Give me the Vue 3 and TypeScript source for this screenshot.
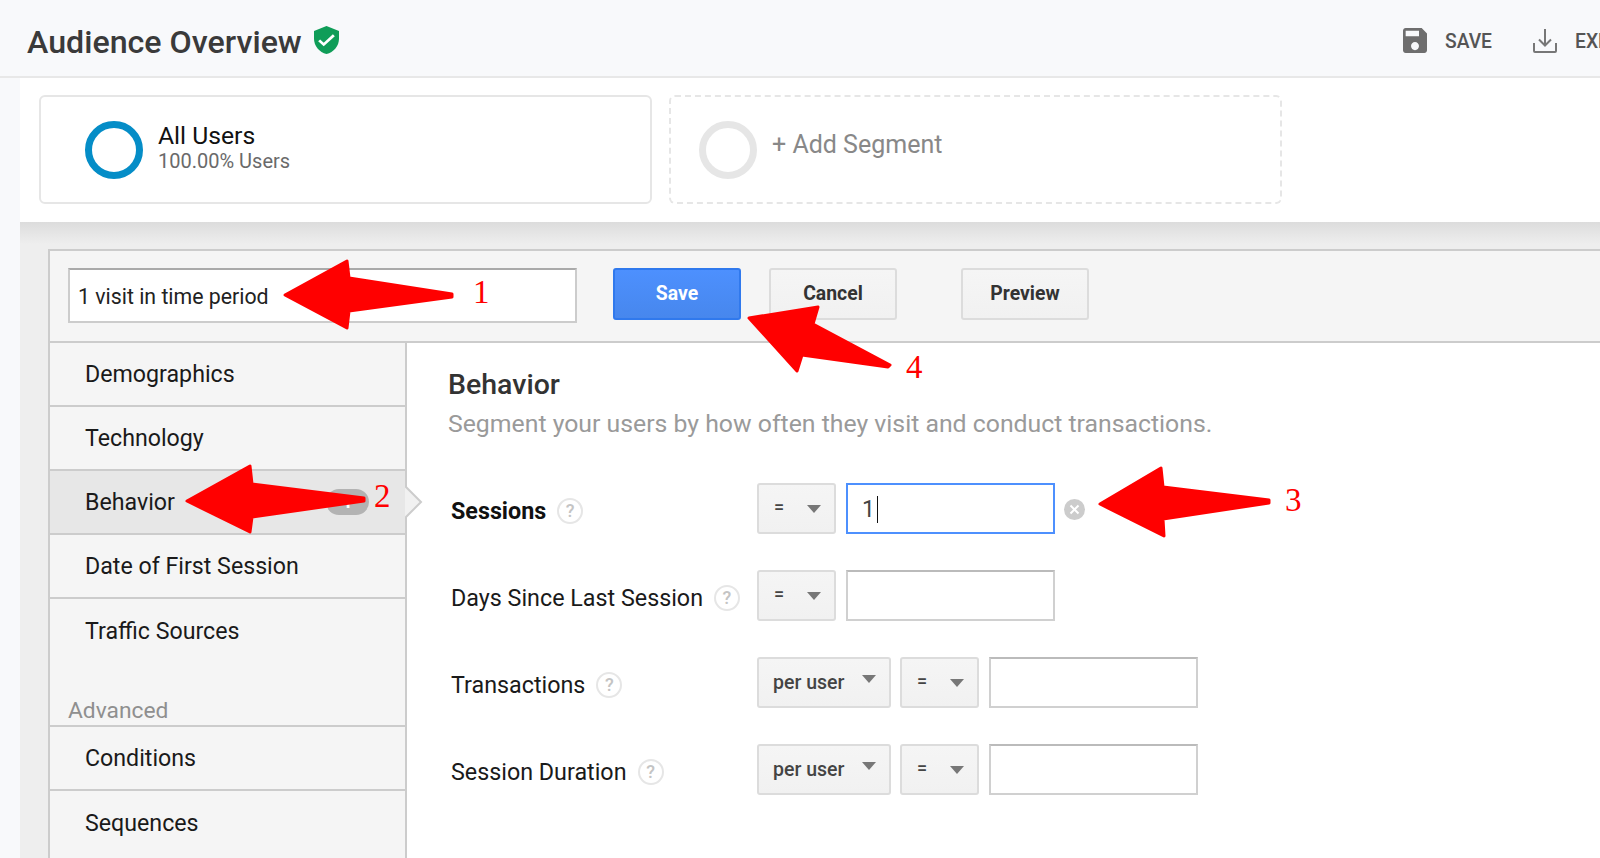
<template>
  <div class="page">
    <header class="topbar">
      <div class="title">
        <h1>Audience Overview</h1>
        <svg class="shield" viewBox="3 1 18 22" preserveAspectRatio="none">
          <path fill="#0f9d58" d="M12 1 3 5v6c0 5.55 3.84 10.74 9 12 5.16-1.26 9-6.45 9-12V5z" />
          <path fill="#fff" d="M10 17l-4-4 1.41-1.41L10 14.17l6.59-6.59L18 9z" />
        </svg>
      </div>
      <div class="actions">
        <svg class="act-icon" viewBox="3 3 18 18" preserveAspectRatio="none">
          <path fill="#6e6e6e" d="M17 3H5c-1.11 0-2 .9-2 2v14c0 1.1.89 2 2 2h14c1.1 0 2-.9 2-2V7l-4-4zm-5 16c-1.66 0-3-1.34-3-3s1.34-3 3-3 3 1.34 3 3-1.34 3-3 3zm3-10H5V5h10v4z" />
        </svg>
        <span class="act-label save-label">SAVE</span>
        <svg class="act-icon" viewBox="0 0 24 25" fill="none" stroke="#777" stroke-width="2">
          <path d="M1 15v8a1 1 0 0 0 1 1h20a1 1 0 0 0 1-1v-8" />
          <path d="M12 1v16M6 11.500l6 6 6-6" />
        </svg>
        <span class="act-label">EXPORT</span>
      </div>
    </header>

    <div class="content">
      <section class="segments">
        <div class="seg-card">
          <span class="ring"></span>
          <div>
            <div class="seg-name">All Users</div>
            <div class="seg-sub">100.00% Users</div>
          </div>
        </div>
        <div class="seg-card seg-card--add">
          <span class="ring ring--empty"></span>
          <div class="seg-add">+ Add Segment</div>
        </div>
      </section>

      <section class="workspace">
        <div class="builder">
          <div class="toolbar">
            <input class="name-input" value="1 visit in time period" readonly />
            <button class="btn btn--primary">Save</button>
            <button class="btn btn--cancel">Cancel</button>
            <button class="btn">Preview</button>
          </div>

          <div class="builder-body">
            <nav class="sidebar">
              <div
                v-for="item in navItems"
                :key="item"
                :class="['nav-item', { 'nav-item--active': item === 'Behavior', 'nav-item--last': item === 'Traffic Sources' }]"
              >
                {{ item }}
                <template v-if="item === 'Behavior'">
                  <span class="badge">1</span>
                  <svg class="pointer" viewBox="0 0 18 34">
                    <path d="M0 1l16 16L0 33" fill="#f1f1f1" stroke="#ccc" stroke-width="2" />
                  </svg>
                </template>
              </div>
              <div class="nav-heading">Advanced</div>
              <div
                v-for="item in advancedItems"
                :key="item"
                :class="['nav-item', { 'nav-item--last': item === 'Sequences' }]"
              >
                {{ item }}
              </div>
            </nav>

            <main class="pane">
              <h2>Behavior</h2>
              <p class="pane-sub">Segment your users by how often they visit and conduct transactions.</p>

              <div v-for="row in rows" :key="row.label" class="row">
                <div :class="['row-label', { 'row-label--strong': row.active }]">
                  {{ row.label }}
                  <span class="help">?</span>
                </div>
                <div v-if="row.perUser" class="select select--wide">
                  <span class="per-user">per user</span><i class="tri tri--high"></i>
                </div>
                <div class="select"><span class="eq">=</span><i class="tri"></i></div>
                <div v-if="row.active" class="field field--focus">1<span class="caret"></span></div>
                <input v-else :class="['field', { 'field--long': row.perUser }]" readonly />
                <span v-if="row.active" class="clear">
                  <svg viewBox="0 0 21 21" width="21" height="21">
                    <circle cx="10.500" cy="10.500" r="10.500" fill="#ccc" />
                    <path d="M6.500 6.500l8 8M14.500 6.500l-8 8" stroke="#fff" stroke-width="2" />
                  </svg>
                </span>
              </div>
            </main>
          </div>
        </div>
      </section>
    </div>

    <!-- red callouts pasted on top of the screenshot -->
    <svg class="callouts" viewBox="0 0 1600 858" width="1600" height="858">
      <g fill="#f00" stroke="#f00" stroke-width="3" stroke-linejoin="round">
        <path d="M285 295 347 261 349 278 452 294 452 297 349 311 347 328z" />
        <path d="M187 501 250 466 252 484 364 498 364 501 252 517 250 532z" />
        <path d="M1100 504 1161 468 1163 487 1269 500 1269 503 1163 519 1164 536z" />
        <path d="M749 318 818 307 813 324 890 365 888 367 802 355 797 371z" />
      </g>
      <g class="digits" fill="#f00">
        <text x="473" y="303">1</text>
        <text x="374" y="507">2</text>
        <text x="1285" y="511">3</text>
        <text x="906" y="378">4</text>
      </g>
    </svg>
  </div>
</template>

<script setup lang="ts">
interface FilterRow {
  label: string
  active?: boolean
  perUser?: boolean
}

const navItems: string[] = ['Demographics', 'Technology', 'Behavior', 'Date of First Session', 'Traffic Sources']
const advancedItems: string[] = ['Conditions', 'Sequences']

const rows: FilterRow[] = [
  { label: 'Sessions', active: true },
  { label: 'Days Since Last Session' },
  { label: 'Transactions', perUser: true },
  { label: 'Session Duration', perUser: true },
]
</script>

<style>
html,
body {
  margin: 0;
  overflow: hidden;
}
</style>

<style scoped>
.page {
  position: relative;
  width: 1600px;
  height: 858px;
  overflow: hidden;
  background: #f8f9fb;
  font-family: Roboto, "Liberation Sans", sans-serif;
  color: #222;
}

.topbar {
  height: 69px;
  padding-top: 7px;
  display: flex;
  align-items: center;
  justify-content: space-between;
  border-bottom: 2px solid #e8e8e8;
  box-sizing: content-box;
}

.title {
  display: flex;
  align-items: center;
  padding-left: 27px;
}

.title h1 {
  margin: 0;
  font-size: 32.200px;
  font-weight: 500;
  color: #3a3a3a;
}

.shield {
  width: 25px;
  height: 28px;
  margin-left: 12px;
  margin-top: -4px;
}

.actions {
  display: flex;
  align-items: center;
  width: 197px;
  flex: none;
  white-space: nowrap;
}

.act-icon {
  width: 24px;
  height: 25px;
  flex: none;
  margin-top: -2px;
}

.act-label {
  margin-left: 18px;
  font-size: 19.300px;
  font-weight: 500;
  color: #555;
}

.save-label {
  margin-right: 41px;
}

.content {
  margin-left: 20px;
}

.segments {
  height: 144px;
  box-sizing: border-box;
  padding: 17px 0 0 19px;
  display: flex;
  gap: 17px;
  background: #fff;
}

.seg-card {
  width: 613px;
  height: 109px;
  box-sizing: border-box;
  display: flex;
  align-items: center;
  padding-left: 44px;
  border: 2px solid #e6e6e6;
  border-radius: 6px;
}

.seg-card--add {
  border-style: dashed;
  padding-left: 28px;
}

.ring {
  width: 58px;
  height: 58px;
  box-sizing: border-box;
  border: 7px solid #058dc7;
  border-radius: 50%;
  margin-right: 15px;
  flex: none;
}

.ring--empty {
  border-color: #e6e6e6;
}

.seg-name {
  font-size: 24.700px;
  line-height: 28px;
  color: #111;
  margin-top: -5px;
}

.seg-sub {
  font-size: 20px;
  line-height: 22px;
  color: #6a6a6a;
}

.seg-add {
  font-size: 25px;
  color: #888;
  margin-top: -10px;
}

.workspace {
  height: 640px;
  box-sizing: border-box;
  padding: 27px 0 0 28px;
  background: linear-gradient(#dcdcdc, #eeeeee 22px);
}

.builder {
  width: 1600px;
  border: 2px solid #ccc;
  border-right: 0;
  background: #f5f5f5;
}

.toolbar {
  height: 92px;
  box-sizing: border-box;
  display: flex;
  align-items: flex-start;
  padding-top: 17px;
  padding-left: 18px;
  border-bottom: 2px solid #ccc;
}

.name-input {
  width: 509px;
  height: 55px;
  box-sizing: border-box;
  padding: 1px 8px 0;
  border: 2px solid #ccc;
  border-top-color: #aaa;
  background: #fff;
  outline: none;
  font: 400 21.300px Roboto, sans-serif;
  color: #222;
  margin-right: 36px;
}

.btn {
  width: 128px;
  height: 52px;
  box-sizing: border-box;
  border: 2px solid #dcdcdc;
  border-radius: 3px;
  background: linear-gradient(#f5f5f5, #f1f1f1);
  font: 700 19.400px Roboto, sans-serif;
  color: #333;
  padding: 0 0 2px;
}

.btn--primary {
  background: linear-gradient(#4d90fe, #4787ed);
  border-color: #3079ed;
  color: #fff;
  margin-right: 28px;
}

.btn--cancel {
  margin-right: 64px;
}

.builder-body {
  display: flex;
  align-items: stretch;
  height: 540px;
  background: #fff;
}

.sidebar {
  width: 355px;
  flex: none;
  background: #f5f5f5;
  border-right: 2px solid #ccc;
}

.nav-item {
  position: relative;
  height: 64px;
  box-sizing: border-box;
  padding-left: 35px;
  display: flex;
  align-items: center;
  border-bottom: 2px solid #ccc;
  font-size: 23.200px;
  color: #1a1a1a;
}

.nav-item--active {
  background: #e7e7e7;
}

.nav-item--last {
  border-bottom: 0;
}

.badge {
  position: absolute;
  left: 276px;
  top: 18px;
  width: 43px;
  height: 26px;
  border-radius: 13px;
  background: #b3b3b3;
  color: #fff;
  font-size: 18px;
  font-weight: 700;
  text-align: center;
  line-height: 26px;
}

.pointer {
  position: absolute;
  right: -18px;
  top: 14px;
  width: 18px;
  height: 34px;
}

.nav-heading {
  height: 64px;
  box-sizing: border-box;
  display: flex;
  align-items: flex-end;
  padding: 0 0 1px 18px;
  border-bottom: 2px solid #ccc;
  font-size: 22.800px;
  color: #8f8f8f;
}

.pane {
  flex: 1;
  padding: 24px 0 0 41px;
  background: #fff;
}

.pane h2 {
  margin: 0;
  font-size: 28.500px;
  line-height: 36px;
  font-weight: 500;
  color: #333;
}

.pane-sub {
  margin: 5px 0 43px;
  font-size: 24.800px;
  line-height: 32px;
  color: #9a9a9a;
}

.row {
  display: flex;
  align-items: flex-start;
  height: 51px;
  margin-bottom: 36px;
}

.row-label {
  width: 306px;
  margin-left: 3px;
  flex: none;
  display: flex;
  align-items: center;
  height: 55px;
  font-size: 23.300px;
  color: #1a1a1a;
}

.row-label--strong {
  font-weight: 700;
  color: #111;
}

.help {
  width: 26px;
  height: 26px;
  box-sizing: border-box;
  margin-left: 11px;
  border: 2px solid #e6e6e6;
  border-radius: 50%;
  font-size: 18px;
  font-weight: 500;
  color: #c4c4c4;
  display: flex;
  align-items: center;
  justify-content: center;
}

.select {
  width: 79px;
  height: 51px;
  box-sizing: border-box;
  flex: none;
  display: flex;
  align-items: center;
  justify-content: space-between;
  padding: 0 13px 2px 15px;
  margin-right: 10px;
  border: 2px solid #dcdcdc;
  border-radius: 3px;
  background: linear-gradient(#f5f5f5, #f1f1f1);
  font-size: 18px;
  font-weight: 500;
  color: #444;
}

.select--wide {
  width: 134px;
  margin-right: 9px;
  padding-left: 14px;
}

.per-user {
  font-size: 19.500px;
  margin-top: 2px;
}

.eq {
  margin-top: -3px;
}

.tri {
  width: 0;
  height: 0;
  border-left: 7px solid transparent;
  border-right: 7px solid transparent;
  border-top: 8px solid #777;
  margin-top: 2px;
}

.tri--high {
  margin-top: -5px;
}

.field {
  width: 209px;
  height: 51px;
  box-sizing: border-box;
  border: 2px solid #d0d0d0;
  border-top-color: #bbb;
  background: #fff;
  outline: none;
  padding: 0;
  flex: none;
}

.field--long {
  width: 209px;
}

.field--focus {
  border-color: #4d90fe;
  display: flex;
  align-items: center;
  padding-left: 14px;
  padding-top: 2px;
  font-size: 23px;
  color: #444;
}

.caret {
  width: 1.500px;
  height: 27px;
  background: #111;
  margin-left: 2px;
}

.clear {
  margin-left: 9px;
  margin-top: 16px;
  height: 21px;
}

.callouts {
  position: absolute;
  left: 0;
  top: 0;
  pointer-events: none;
}

.digits {
  font-family: "Liberation Serif", serif;
  font-size: 33px;
}
</style>
